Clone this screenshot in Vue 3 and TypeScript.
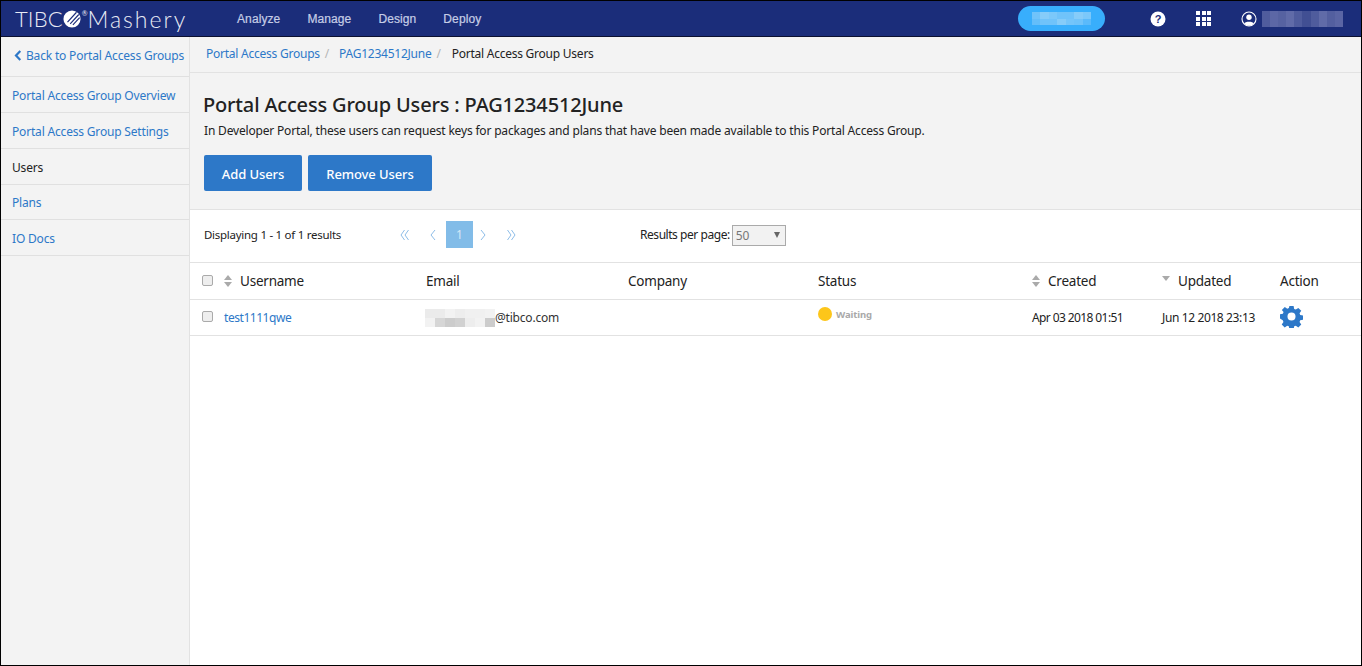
<script setup lang="ts">
const topNav = ["Analyze", "Manage", "Design", "Deploy"];
const sideLinks = [
  { label: "Portal Access Group Overview", active: false },
  { label: "Portal Access Group Settings", active: false },
  { label: "Users", active: true },
  { label: "Plans", active: false },
  { label: "IO Docs", active: false },
];
const columns = [
  { label: "Username", sort: "both", check: true },
  { label: "Email" },
  { label: "Company" },
  { label: "Status" },
  { label: "Created", sort: "both" },
  { label: "Updated", sort: "down" },
  { label: "Action" },
];
// pixelated (redacted) blocks in the reference
const pillBlur = [
  0.3, 0.5, 0.4, 0.3, 0.3, 0.5, 0.4,
  0.2, 0.3, 0.3, 0.5, 0.35, 0.3, 0.1,
];
const nameBlur = [0.3, 0.38, 0.34, 0.4, 0.3, 0.22, 0.3, 0.4, 0.32, 0.36];
const mailBlur = [
  0.08, 0.08, 0.05, 0.07, 0.06, 0.06, 0.05,
  0.05, 0.16, 0.2, 0.18, 0.07, 0.05, 0.2,
];
</script>

<template>
  <div class="page">
    <header class="topbar">
      <div class="logo">
        <span class="tibco">TIBC</span>
        <svg class="logo-ball" viewBox="0 0 20 20" width="18" height="18">
          <circle cx="10" cy="10" r="9.500" fill="#fff" />
          <path d="M5 13.500 L15 2.500 M8 15.500 L17.500 5 M11 16.500 L18.500 8.500" stroke="#1b2d7a" stroke-width="1.300" />
        </svg>
        <sup class="reg">®</sup>
        <span class="mashery">Mashery</span>
      </div>
      <nav class="topnav">
        <a v-for="item in topNav" :key="item">{{ item }}</a>
      </nav>
      <div class="top-right">
        <div class="pill">
          <i v-for="(o, i) in pillBlur" :key="i" :style="{ opacity: o + 0.2 }"></i>
        </div>
        <svg class="ico-help" viewBox="0 0 16 16" width="16" height="16">
          <circle cx="8" cy="8" r="7.500" fill="#fff" />
          <text x="8" y="12" text-anchor="middle" class="help-mark">?</text>
        </svg>
        <div class="apps">
          <i v-for="n in 9" :key="n"></i>
        </div>
        <svg class="ico-user" viewBox="0 0 16 16" width="16" height="16">
          <circle cx="8" cy="8" r="7" fill="none" stroke="#fff" stroke-width="1.100" />
          <circle cx="8" cy="6.200" r="2.700" fill="#fff" />
          <path d="M3.200 12.600 C4 10.200 12 10.200 12.800 12.600 C11.500 14.200 9.500 14.800 8 14.800 C6.500 14.800 4.500 14.200 3.200 12.600 Z" fill="#fff" />
        </svg>
        <div class="user-blur">
          <i v-for="(o, i) in nameBlur" :key="i" :style="{ opacity: o }"></i>
        </div>
      </div>
    </header>

    <div class="body">
      <aside class="sidebar">
        <a class="back">
          <svg viewBox="0 0 8 12" width="8" height="11">
            <path d="M6.500 1 L1.800 6 L6.500 11" fill="none" stroke="#2d78c8" stroke-width="2.400" />
          </svg>
          Back to Portal Access Groups
        </a>
        <a v-for="link in sideLinks" :key="link.label" class="side-link" :class="{ active: link.active }">
          {{ link.label }}
        </a>
      </aside>

      <main class="main">
        <div class="crumbs">
          <a>Portal Access Groups</a><span class="sep">/</span>
          <a>PAG1234512June</a><span class="sep">/</span>
          <span class="here">Portal Access Group Users</span>
        </div>

        <section class="head">
          <h1>Portal Access Group Users : PAG1234512June</h1>
          <p>In Developer Portal, these users can request keys for packages and plans that have been made available to this Portal Access Group.</p>
          <div class="actions">
            <button class="add">Add Users</button>
            <button class="remove">Remove Users</button>
          </div>
        </section>

        <div class="toolbar">
          <span class="count">Displaying 1 - 1 of 1 results</span>
          <div class="pager">
            <span class="pg">
              <svg viewBox="0 0 10 12" width="10" height="12"><path d="M4.500 1 L1 6 L4.500 11 M8.500 1 L5 6 L8.500 11" /></svg>
            </span>
            <span class="pg">
              <svg viewBox="0 0 10 12" width="10" height="12"><path d="M7 1 L3 6 L7 11" /></svg>
            </span>
            <span class="pg current">1</span>
            <span class="pg">
              <svg viewBox="0 0 10 12" width="10" height="12"><path d="M3 1 L7 6 L3 11" /></svg>
            </span>
            <span class="pg">
              <svg viewBox="0 0 10 12" width="10" height="12"><path d="M1.500 1 L5 6 L1.500 11 M5.500 1 L9 6 L5.500 11" /></svg>
            </span>
          </div>
          <div class="per-page">
            <span>Results per page:</span>
            <div class="select">50<b></b></div>
          </div>
        </div>

        <div class="grid-row grid-head">
          <div v-for="(col, i) in columns" :key="col.label" class="cell" :class="'c' + i">
            <input v-if="col.check" type="checkbox" class="check" />
            <span v-if="col.sort === 'both'" class="sort">
              <b class="up"></b><b class="down"></b>
            </span>
            <span v-if="col.sort === 'down'" class="sort single"><b class="down"></b></span>
            {{ col.label }}
          </div>
        </div>

        <div class="grid-row grid-data">
          <div class="cell c0">
            <input type="checkbox" class="check" />
            <a class="user-link">test1111qwe</a>
          </div>
          <div class="cell c1">
            <span class="mail-blur"><i v-for="(o, i) in mailBlur" :key="i" :style="{ opacity: o }"></i></span>@tibco.com
          </div>
          <div class="cell c2"></div>
          <div class="cell c3 status"><i class="dot"></i>Waiting</div>
          <div class="cell c4">Apr 03 2018 01:51</div>
          <div class="cell c5">Jun 12 2018 23:13</div>
          <div class="cell c6">
            <svg class="gear" viewBox="0 0 24 24" width="23" height="23">
              <path fill="#2d78c8" fill-rule="evenodd" d="M9.800 1h4.400l.6 3.100 1.700.7 2.600-1.800 3.100 3.100-1.800 2.600.7 1.700 3.100.6v4.400l-3.100.6-.7 1.700 1.800 2.600-3.100 3.100-2.600-1.800-1.700.7-.6 3.100H9.800l-.6-3.100-1.700-.7-2.600 1.800-3.100-3.100 1.800-2.600-.7-1.700L-.1 14v-4.400l3.100-.6.7-1.700L1.900 5.100 5 2l2.600 1.800 1.700-.7ZM12 7.800a4.200 4.200 0 1 0 0 8.400 4.200 4.200 0 0 0 0-8.400Z" />
            </svg>
          </div>
        </div>
      </main>
    </div>
  </div>
</template>

<style>
html, body { margin: 0; background: #fff; }
</style>

<style scoped>
* { box-sizing: border-box; }

.page {
  width: 1362px;
  height: 666px;
  border: 1px solid #000;
  display: flex;
  flex-direction: column;
  font-family: "Noto Sans", "Open Sans", sans-serif;
  font-size: 12px;
  color: #222;
  overflow: hidden;
}

a { color: #2d78c8; text-decoration: none; }

.topbar {
  height: 36px;
  flex: none;
  background: #1b2d7a;
  border-bottom: 1px solid #0c1030;
  display: flex;
  align-items: center;
  color: #fff;
}
.logo {
  width: 236px;
  padding-left: 14px;
  display: flex;
  align-items: center;
  font-family: Lato, sans-serif;
  font-size: 22px;
  font-weight: 300;
  letter-spacing: 0.1px;
  color: #e8ebf5;
}
.logo-ball { margin-left: 0; }
.reg { font-size: 7px; margin: -12px 0 0 1px; font-weight: 400; letter-spacing: 0; }
.mashery { font-size: 23px; letter-spacing: 2px; }
.topnav { display: flex; gap: 27px; }
.topnav a {
  color: #c6cde6;
  font-family: "Liberation Sans", sans-serif;
  font-size: 12px;
  letter-spacing: 0.1px;
  -webkit-text-stroke: 0.2px #c6cde6;
}
.top-right {
  margin-left: auto;
  display: flex;
  align-items: center;
  padding-right: 18px;
}
.pill {
  width: 87px;
  height: 25px;
  border-radius: 13px;
  background: #38aefc;
  margin-right: 45px;
  padding: 6px 14px;
  display: grid;
  grid-template-columns: repeat(7, 1fr);
}
.pill i { background: #a8d8f8; }
.ico-help { margin-right: 30px; }
.help-mark { font-size: 11px; font-weight: 700; fill: #1b2d7a; font-family: "Liberation Sans", sans-serif; }
.apps {
  display: grid;
  grid-template-columns: repeat(3, 4px);
  grid-auto-rows: 4px;
  gap: 1.500px;
  width: 15px;
  margin-right: 30px;
}
.apps i { background: #fff; }
.ico-user { margin-right: 5px; }
.user-blur { display: flex; width: 81px; height: 16px; }
.user-blur i { flex: 1; background: #c9c9ee; }

.body { flex: 1; display: flex; min-height: 0; }

.sidebar {
  width: 189px;
  flex: none;
  background: #f3f3f3;
  border-right: 1px solid #e2e2e2;
  display: flex;
  flex-direction: column;
}
.back {
  height: 40px;
  padding: 0 0 2px 13px;
  display: flex;
  align-items: center;
  gap: 4px;
  border-bottom: 1px solid #e0e0e0;
  font-size: 12px;
  white-space: nowrap;
  letter-spacing: -0.18px;
}
.side-link {
  height: 36px;
  padding: 2px 0 0 11px;
  display: flex;
  align-items: center;
  border-bottom: 1px solid #e0e0e0;
  letter-spacing: -0.18px;
}
.side-link:nth-child(5) { height: 35px; padding-top: 0; }
.side-link.active { color: #222; }

.main { flex: 1; display: flex; flex-direction: column; min-width: 0; }

.crumbs {
  height: 36px;
  background: #f3f3f3;
  border-bottom: 1px solid #e2e2e2;
  padding: 0 0 2px 16px;
  display: flex;
  align-items: center;
  letter-spacing: -0.24px;
}
.sep { color: #b5b5b5; margin: 0 10px 0 5px; }
.here { color: #222; margin-left: 1px; }

.head {
  height: 137px;
  background: #f3f3f3;
  border-bottom: 1px solid #e2e2e2;
  padding: 18px 0 0 14px;
}
h1 {
  margin: 0 0 0 -1px;
  font-size: 20px;
  font-weight: 500;
  line-height: 28px;
  letter-spacing: -0.17px;
  color: #222;
}
.head p {
  margin: 3px 0 0;
  font-size: 12px;
  line-height: 18px;
  letter-spacing: -0.18px;
  color: #222;
}
.actions { display: flex; gap: 6px; margin-top: 15px; }
.actions button {
  height: 36px;
  border: 0;
  border-radius: 2px;
  background: #2d78c8;
  color: #fff;
  padding: 2px 0 0;
  font: 500 13px "Noto Sans", sans-serif;
  letter-spacing: -0.1px;
}
.add { width: 98px; }
.remove { width: 124px; }

.toolbar {
  height: 53px;
  flex: none;
  border-bottom: 1px solid #e2e2e2;
  display: flex;
  align-items: center;
  padding-left: 14px;
}
.count { width: 187px; font-size: 11.500px; letter-spacing: -0.27px; margin-top: -4px; }
.pager { display: flex; width: 249px; margin-top: -3px; }
.pg {
  width: 27px;
  height: 27px;
  display: flex;
  align-items: center;
  justify-content: center;
}
.pg svg { fill: none; stroke: #8dbde8; stroke-width: 1; }
.pg:nth-child(2) { margin-left: 1px; }
.pg:nth-child(4) { width: 20px; }
.pg:nth-child(5) { width: 20px; margin-left: 8px; }
.pg.current { background: #82bce8; color: #d5e8f7; font-size: 12px; }
.per-page { display: flex; align-items: center; gap: 2px; letter-spacing: -0.45px; margin-top: -4px; }
.select {
  width: 54px;
  height: 21px;
  border: 1px solid #aaa;
  background: #f2f2f2;
  color: #777;
  padding-left: 3px;
  margin-top: 2px;
  line-height: 20px;
  letter-spacing: -0.2px;
  position: relative;
}
.select b {
  position: absolute;
  right: 5px;
  top: 6px;
  border: 3.500px solid transparent;
  border-top: 6px solid #666;
  border-bottom: 0;
}

.grid-row {
  display: grid;
  grid-template-columns: 236px 202px 190px 214px 130px 118px 1fr;
  border-bottom: 1px solid #e2e2e2;
}
.cell { display: flex; align-items: center; white-space: nowrap; }
.grid-head { height: 37px; font-size: 13.500px; letter-spacing: -0.22px; }
.grid-data { height: 36px; letter-spacing: -0.2px; }
.c0 { padding-left: 12px; }
.check {
  width: 11px;
  height: 11px;
  margin: 0;
  appearance: none;
  border: 1px solid #aaa;
  border-radius: 2px;
  background: #eee;
}
.grid-head .check { margin-right: 11px; margin-top: -2px; }
.grid-data .check { margin-right: 11px; margin-top: -2px; }
.grid-data .c1 { color: #333; margin-left: -1px; }
.grid-data .c4 { letter-spacing: -0.6px; }
.grid-data .c5 { letter-spacing: -0.38px; }

.sort {
  display: inline-flex;
  flex-direction: column;
  gap: 2px;
  width: 16px;
  margin-top: -1px;
}
.sort b { width: 0; height: 0; border: 4.500px solid transparent; }
.sort .up { border-top: 0; border-bottom: 5px solid #aaa; }
.sort .down { border-bottom: 0; border-top: 5px solid #aaa; }
.sort.single { margin-top: -6px; }
.mail-blur {
  display: grid;
  grid-template-columns: repeat(7, 10px);
  grid-auto-rows: 9px;
  width: 70px;
  height: 18px;
}
.mail-blur i { background: #000; }

.status {
  color: #a9a9a9;
  font-size: 9.500px;
  font-weight: 700;
  letter-spacing: -0.1px;
  padding-bottom: 7px;
}
.dot {
  width: 14px;
  height: 14px;
  border-radius: 50%;
  background: #fdc61a;
  margin-right: 4px;
}
.gear { margin-top: -2px; }
.user-link { color: #2d78c8; letter-spacing: -0.45px; }
</style>
